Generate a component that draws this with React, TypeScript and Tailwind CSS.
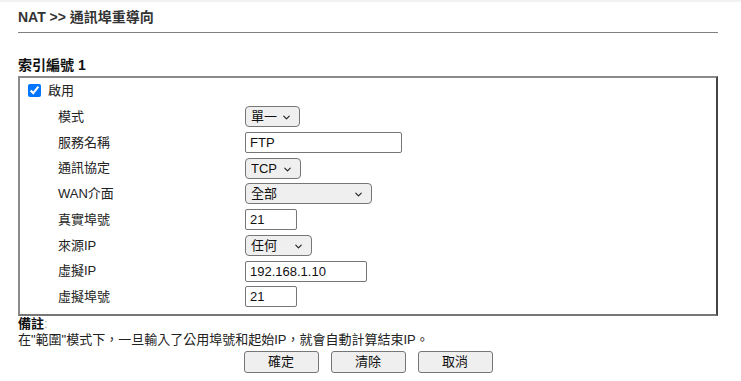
import { ChevronDown } from 'lucide-react';

const font = { fontFamily: '"Liberation Sans", "Noto Sans CJK TC", sans-serif' };

function Select({ value, width }: { value: string; width: string }) {
    return (
        <div className={`relative h-[21px] ${width}`}>
            <select
                defaultValue={value}
                className="appearance-none w-full h-full bg-[#efefef] border border-[#767676] rounded-[4px] pl-[5px] text-[13px] text-[#111] leading-[19px]"
            >
                <option>{value}</option>
            </select>
            <ChevronDown
                size={11}
                strokeWidth={2.5}
                className="absolute right-[8px] top-[6px] text-[#222] pointer-events-none"
            />
        </div>
    );
}

function Input({ value, width }: { value: string; width: string }) {
    return (
        <input
            defaultValue={value}
            className={`h-[21px] ${width} bg-white border border-[#767676] rounded-[2px] px-[4px] text-[13px] text-[#111]`}
        />
    );
}

const rows: { label: string; control: React.ReactNode }[] = [
    { label: '模式', control: <Select value="單一" width="w-[55px]" /> },
    { label: '服務名稱', control: <Input value="FTP" width="w-[157px]" /> },
    { label: '通訊協定', control: <Select value="TCP" width="w-[56px]" /> },
    { label: 'WAN介面', control: <Select value="全部" width="w-[127px]" /> },
    { label: '真實埠號', control: <Input value="21" width="w-[52px]" /> },
    { label: '來源IP', control: <Select value="任何" width="w-[67px]" /> },
    { label: '虛擬IP', control: <Input value="192.168.1.10" width="w-[122px]" /> },
    { label: '虛擬埠號', control: <Input value="21" width="w-[52px]" /> },
];

export default function App() {
    return (
        <div className="w-[741px] h-[381px] bg-white border-t-2 border-[#f2f2f2] text-[13px] text-[#222]" style={font}>
            <div className="w-[700px] ml-[18px]">
                {/* Title */}
                <div className="pt-[7px] h-[23px] leading-[16px] text-[14px] font-bold text-[#333]">NAT &gt;&gt; 通訊埠重導向</div>
                <div className="mt-[7px] border-t-[1.5px] border-[#808080]" />

                <div className="mt-[24px] leading-[16px] text-[14px] font-bold text-[#111]">索引編號 1</div>

                {/* Form box */}
                <div className="mt-[3px] border-2 border-t-[#8a8a8a] border-l-[#8a8a8a] border-r-[#444] border-b-[#777] pb-[4px]">
                    <label className="flex items-center h-[25.75px] pl-[4px]">
                        <input type="checkbox" defaultChecked className="w-[13px] h-[13px] m-[4px] accent-[#0075ff]" />
                        <span className="ml-[3px]">啟用</span>
                    </label>
                    {rows.map((r) => (
                        <div key={r.label} className="flex items-center h-[25.75px]">
                            <div className="w-[225px] pl-[38px]">{r.label}</div>
                            <div>{r.control}</div>
                        </div>
                    ))}
                </div>

                {/* Notes */}
                <div className="leading-[16px]">
                    <span className="font-bold text-[#111]">備註</span>
                    <span className="text-[#aaa]">:</span>
                </div>
                <div className="leading-[16px]">在"範圍"模式下，一旦輸入了公用埠號和起始IP，就會自動計算結束IP。</div>

                <div className="mt-[3px] flex justify-center gap-[12px]">
                    {['確定', '清除', '取消'].map((b) => (
                        <button
                            key={b}
                            className="w-[75px] h-[22px] bg-[#efefef] border border-[#767676] rounded-[3px] text-[13px] text-[#111]"
                        >
                            {b}
                        </button>
                    ))}
                </div>
            </div>
        </div>
    );
}
